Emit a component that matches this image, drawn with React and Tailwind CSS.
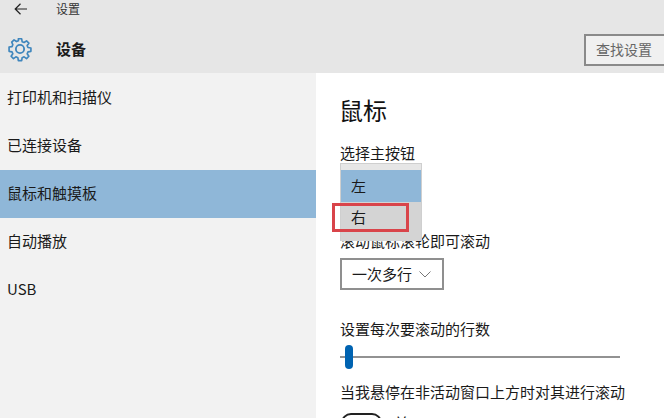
const font = { fontFamily: '"Noto Sans CJK SC", "Open Sans", sans-serif' };

function Gear() {
  return (
    <svg width="26" height="26" viewBox="0 0 24 24" fill="none" stroke="#3f86bd" strokeWidth="1.7" strokeLinejoin="round">
      <path d="M10.3 1.5h3.4l.5 3 2 .85 2.5-1.75 2.4 2.4-1.75 2.5.85 2 3 .5v3.4l-3 .5-.85 2 1.75 2.5-2.4 2.4-2.5-1.75-2 .85-.5 3h-3.4l-.5-3-2-.85-2.5 1.75-2.4-2.4 1.75-2.5-.85-2-3-.5V10l3-.5.85-2L3.5 5l2.4-2.4 2.5 1.75 2-.85z" transform="translate(1.2 1.2) scale(.9)" />
      <circle cx="12" cy="12" r="3.8" />
    </svg>
  );
}

function NavItem({ label, active }) {
  return (
    <div className={`h-12 flex items-center pl-[7px] pb-[2px] text-[15px] text-[#1a1a1a] ${active ? "bg-[#8fb7d8]" : ""}`}>
      {label}
    </div>
  );
}

export default function App() {
  return (
    <div className="w-[664px] h-[418px] overflow-hidden bg-white" style={font}>
      {/* Header */}
      <div className="h-[73px] bg-[#e6e6e6]">
        <div className="h-[17px] flex items-center">
          <svg className="ml-[14px]" width="13" height="12" viewBox="0 0 13 12" fill="none" stroke="#222" strokeWidth="1.2">
            <path d="M13 6H1M6.5.8 1.2 6l5.3 5.2" />
          </svg>
          <span className="ml-[29px] text-[12px] text-[#333]">设置</span>
        </div>
        <div className="h-[56px] flex items-start pt-[19px] pl-[7px]">
          <Gear />
          <span className="ml-[23px] text-[15px] font-bold text-[#1a1a1a] leading-[26px]">设备</span>
          <div className="ml-auto mt-[-2px] w-[80px] h-[32px] border-2 border-r-0 border-[#8a8a8a] bg-[#f0f0f0] pl-[10px] text-[14px] leading-[26px] text-[#666]">
            查找设置
          </div>
        </div>
      </div>

      <div className="flex h-[345px]">
        {/* Sidebar */}
        <div className="w-[316px] bg-[#f2f2f2] pt-[1px]">
          <NavItem label="打印机和扫描仪" />
          <NavItem label="已连接设备" />
          <NavItem label="鼠标和触摸板" active />
          <NavItem label="自动播放" />
          <NavItem label="USB" />
        </div>

        {/* Content */}
        <div className="relative flex-1 pl-6 text-[#1a1a1a]">
          <div className="mt-[19px] h-[36px] -ml-px text-[24px] leading-[36px] text-[#111]">鼠标</div>
          <div className="mt-[14px] h-[22px] text-[15px] leading-[22px]">选择主按钮</div>
          <div className="mt-[66px] h-[22px] text-[15px] leading-[22px]">滚动鼠标滚轮即可滚动</div>
          <div className="mt-[6px] w-[104px] h-[32px] border-2 border-[#8f8f8f] flex items-center pl-[10px] text-[15px]">
            一次多行
            <svg className="ml-[7px]" width="12" height="7" viewBox="0 0 12 7" fill="none" stroke="#777" strokeWidth="1">
              <path d="M.5.5 6 6l5.5-5.5" />
            </svg>
          </div>
          <div className="mt-[28px] h-[22px] text-[15px] leading-[22px]">设置每次要滚动的行数</div>
          <div className="relative mt-[5px] w-[280px] h-[24px] flex items-center">
            <div className="w-full h-[2px] bg-[#929292]" />
            <div className="absolute left-[5px] top-0 w-2 h-6 rounded-full bg-[#0063b1]" />
          </div>
          <div className="mt-[12px] h-[22px] text-[15px] leading-[22px] whitespace-nowrap">当我悬停在非活动窗口上方时对其进行滚动</div>
          <div className="mt-[9px] flex items-center">
            <div className="w-[41px] h-[20px] ml-px rounded-full border-2 border-[#222]" />
            <span className="ml-[12px] text-[15px]">关</span>
          </div>

          {/* Open dropdown */}
          <div className="absolute left-6 top-[90px] w-[82px] h-[78px] bg-[#e6e6e6] border border-[#cfcfcf] border-b-0 pt-[6px] text-[15px]">
            <div className="h-8 bg-[#8fb7d8] flex items-center pl-[10px]">左</div>
            <div className="h-[39px] bg-[#d4d4d4] pt-[2px] pl-[10px] leading-[26px]">右</div>
          </div>
          {/* Red highlight box */}
          <div className="absolute left-4 top-[130px] w-[77px] h-[29px] border-[3px] border-[#d9444a]" />
        </div>
      </div>
    </div>
  );
}
